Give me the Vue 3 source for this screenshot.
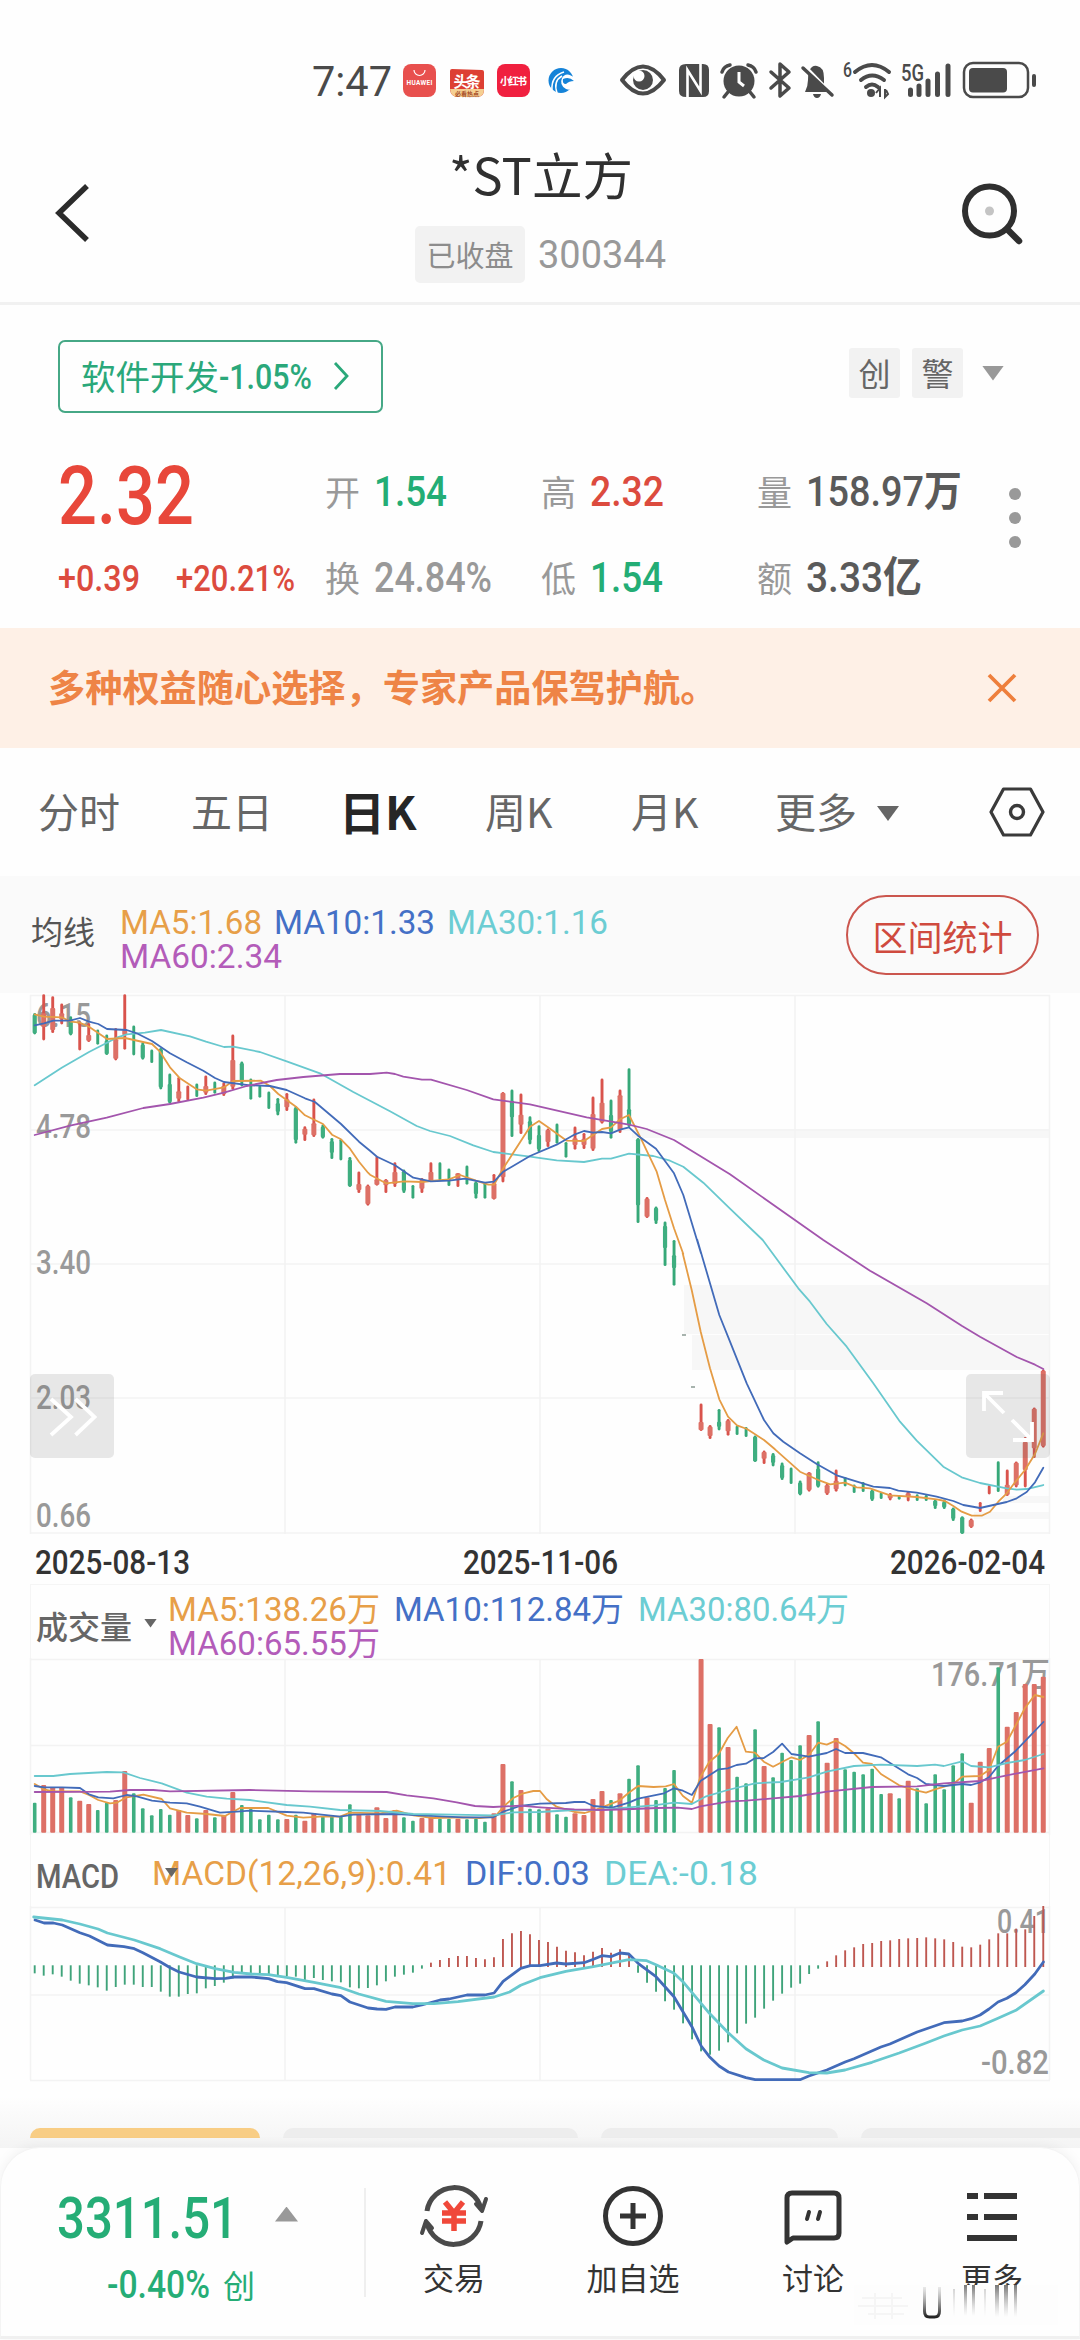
<script setup>
const vFit = {
  mounted(el, binding) {
    const natural = el.getBoundingClientRect().width
    el.style.transform = `scaleX(${binding.value / natural})`
    el.style.marginRight = `${binding.value - natural}px`
  },
}

const STEP = 9.005
const FIRST = 34.7
const barX = (i) => FIRST + STEP * i

// [direction, high, low, body top, body bottom]; three units per pixel
const candlesA = [
  ['g', 100, 162, 104, 160], ['r', 44, 180, 100, 140], ['r', 50, 158, 84, 150], ['r', 72, 132, 100, 118],
  ['g', 110, 165, 120, 162], ['r', 125, 210], ['r', 130, 185, 165, 182], ['g', 150, 193], ['g', 165, 224, 182, 222],
  ['r', 145, 240, 178, 236], ['r', 44, 208, 150, 165], ['g', 138, 225], ['g', 188, 238, 194, 234], ['g', 210, 248],
  ['g', 205, 327, 208, 322], ['g', 282, 370, 312, 366], ['r', 292, 366, 334, 356], ['r', 318, 360], ['g', 312, 350],
  ['r', 288, 344, 318, 338], ['g', 306, 340], ['r', 308, 347, 318, 342], ['r', 165, 328, 240, 320], ['g', 246, 318, 250, 305],
  ['g', 297, 358], ['g', 318, 352], ['g', 336, 386], ['g', 355, 405, 370, 395], ['r', 340, 392, 358, 382],
  ['g', 380, 490, 384, 480], ['r', 440, 482, 446, 464], ['r', 357, 470, 430, 466], ['g', 435, 475, 440, 472],
  ['g', 475, 536, 484, 518], ['g', 478, 540], ['g', 532, 620, 540, 618], ['r', 576, 638, 612, 630],
  ['r', 615, 676, 618, 672], ['r', 530, 616, 598, 614],
]
const candlesB = [
  ['r', 598, 638, 600, 616], ['r', 548, 620, 576, 612], ['g', 570, 638, 574, 632], ['g', 616, 655], ['r', 595, 638, 600, 626],
  ['r', 548, 605, 576, 604], ['g', 548, 600], ['g', 567, 617], ['r', 580, 620, 580, 600], ['g', 558, 613],
  ['g', 605, 655, 608, 642], ['g', 610, 655], ['r', 583, 658, 610, 656], ['r', 337, 606, 339, 592], ['g', 330, 470, 362, 412],
  ['r', 342, 461, 404, 434], ['g', 410, 492, 424, 480], ['g', 437, 515, 465, 508], ['r', 447, 500, 450, 486], ['g', 432, 490],
  ['g', 487, 532], ['r', 441, 508, 475, 495], ['r', 460, 506, 476, 495], ['r', 351, 512, 402, 506], ['r', 297, 430, 368, 426],
  ['g', 360, 475, 405, 455], ['r', 330, 458, 346, 450], ['g', 266, 440, 388, 435], ['g', 475, 728, 478, 676],
  ['r', 652, 713, 656, 710], ['g', 681, 731, 684, 722], ['g', 726, 857, 738, 804], ['g', 781, 916, 826, 864],
]
const candlesC = [
  ['r', 492, 572, 546, 570], ['r', 556, 596, 560, 588], ['g', 508, 570, 545, 560], ['r', 538, 586, 542, 574], ['g', 558, 584],
  ['g', 562, 590], ['g', 588, 665, 590, 664], ['r', 633, 671, 636, 656], ['g', 640, 678, 646, 668], ['g', 669, 719, 676, 714],
  ['g', 684, 731], ['g', 723, 765, 728, 762], ['r', 697, 754, 698, 750], ['g', 665, 742, 686, 738], ['r', 732, 764, 736, 760],
  ['r', 690, 754, 722, 748], ['g', 712, 738], ['g', 735, 758], ['g', 727, 755], ['g', 750, 782, 752, 778], ['g', 758, 776],
  ['r', 760, 780, 764, 775], ['g', 768, 778], ['r', 754, 783, 760, 770], ['g', 764, 782], ['g', 766, 782],
  ['g', 780, 806, 782, 798], ['g', 780, 806, 786, 802], ['g', 804, 842, 806, 836], ['g', 830, 881, 832, 880],
  ['r', 837, 863, 840, 860], ['r', 787, 815], ['r', 737, 762], ['g', 665, 755], ['r', 690, 767, 734, 764],
  ['r', 666, 741, 668, 736], ['r', 592, 741, 606, 690], ['r', 504, 653, 506, 625], ['r', 390, 622, 392, 618],
]
const place = (list, start, top) =>
  list.map(([d, hi, lo, bt, bb], k) => ({
    d,
    x: barX(start + k),
    hi: top + hi / 3,
    lo: top + lo / 3,
    bt: bt === undefined ? null : top + bt / 3,
    bb: bb === undefined ? null : top + bb / 3,
  }))
const candles = [
  ...place(candlesA, 0, 980),
  ...place(candlesB, 39, 980),
  ...place(candlesC, 74, 1240),
]

// Joins segments of [x, y] samples; each segment carries its own origin and scale.
const line = (...segments) =>
  segments
    .flatMap(([ox, oy, sx, s]) =>
      s.trim().split(/\s+/).map((p) => {
        const [x, y] = p.split(',').map(Number)
        return `${(ox + x / sx).toFixed(1)},${(oy + y / 3).toFixed(1)}`
      })
    )
    .join(' ')

const priceLines = [
  ['cyan', line(
    [20, 980, 3, '44,316 125,263 207,216 290,173 320,163 375,158 423,150 510,169 558,185 612,201 640,200 720,216 800,244 900,280 1000,336'],
    [370, 980, 3, '0,362 60,394 140,438 180,453 240,468 310,496 370,516 480,530 560,541 642,546 696,536 723,536 777,521 850,528 900,542 940,560 1000,608 1080,686'],
    [660, 1240, 3, '308,0 415,145 450,185 500,252 560,320 640,430 720,545 770,602 850,680 905,712 960,729 1040,745 1070,749 1100,747 1125,741 1150,735'])],
  ['orange', line(
    [20, 980, 3, '44,103 72,110 125,112 152,125 180,128 207,140 261,177 315,174 342,180 396,192 420,215 450,262 480,295 530,328 558,332 612,322 640,303 723,302 750,318 775,342 828,380 855,406 909,432 936,464 963,478 990,506 1017,545 1044,578'],
    [370, 980, 3, '0,584 48,610 102,604 156,606 183,603 237,598 270,585 318,602 355,614 372,614 400,565 480,440 507,423 534,442 590,482 642,483 696,447 723,442 750,418 777,405 810,470 860,575 885,660 912,745 940,822'],
    [660, 1240, 3, '68,40 95,150 122,275 150,385 178,478 204,530 231,556 261,567 312,600 345,628 420,695 480,722 510,733 555,728 590,742 630,745 690,766 770,771 830,778 855,783 880,798 905,815 935,827 965,827 990,815 1015,785 1040,760 1065,727 1095,690 1125,642 1150,580'])],
  ['blue', line(
    [20, 980, 3, '44,136 72,130 100,122 150,122 180,114 207,125 235,132 261,147 320,150 350,160 396,183 450,220 500,247 550,272 585,294 612,306 690,316 750,318 800,330 855,355 885,366 963,432 1017,485'],
    [370, 980, 3, '0,512 21,530 75,556 130,593 183,604 237,602 285,596 345,608 372,605 400,575 480,528 560,494 615,463 642,453 669,458 696,456 723,460 750,449 777,442 804,467 858,506 912,580 940,645 993,820'],
    [660, 1240, 3, '112,0 178,225 204,290 260,430 312,540 340,580 370,605 420,640 470,672 530,706 640,740 690,744 715,752 770,758 830,770 880,783 910,795 960,804 1000,795 1040,786 1070,775 1100,756 1125,727 1150,683'])],
  ['purple', line(
    [20, 980, 3, '44,465 150,437 260,413 370,384 450,372 550,353 612,338 680,318 770,300 850,291 960,282'],
    [370, 980, 3, '0,282 50,278 75,282 100,290 156,299 183,299 290,330 370,358 480,373 650,412 777,434 830,447 912,480 1080,583'],
    [660, 1240, 3, '490,0 630,92 800,190 905,257 960,290 1070,351 1125,374 1150,387'])],
]

const volumeDirs = candles.map((c) => c.d)
volumeDirs.splice(72, 0, '-', '-')
const volumeTops = [
  668, 615, 622, 622, 652, 662, 672, 690, 668, 660, 573, 640, 685, 706, 687, 704, 690, 705, 715, 690, 712, 706, 636, 675, 687,
  718, 704, 718, 717, 704, 722, 700, 710, 706, 710, 673, 702, 706, 682, 714, 690, 712, 722, 714, 710, 716, 716, 716, 718, 716,
  725, 700, 552, 604, 630, 686, 688, 685, 703, 710, 700, 705, 657, 633, 660, 640, 596, 556, 652, 660, 624, 570, 757, 757, 237,
  432, 442, 501, 590, 610, 448, 558, 592, 518, 540, 496, 465, 424, 548, 474, 568, 575, 583, 566, 642, 640, 655, 602, 625, 670,
  583, 628, 556, 520, 668, 545, 504, 262, 440, 396, 312, 312, 290,
]
const volumeBars = volumeTops
  .map((t, i) => ({ d: volumeDirs[i], x: barX(i), top: 1580 + t / 3 }))
  .filter((b) => b.d !== '-')

const volumeLines = [
  ['orange', line(
    [20, 1580, 3, '44,612 72,628 100,634 180,634 207,645 235,660 270,670 290,668 320,652 370,644 425,657 450,685 500,698 560,702 615,708 660,684 745,684 800,707 850,713 900,710 960,710 990,698 1080,700 1130,692 1180,706 1240,714 1330,712 1380,714 1425,710 1450,680 1480,654 1510,640 1540,633'],
    [540, 1580, 2.904, '0,633 20,658 48,680 75,688 100,696 130,699 165,688 200,674 230,662 258,638 285,618 330,621 365,619 389,612 415,648 441,668 466,590 492,545 519,522 545,474 571,440 598,515 624,518 650,545 677,560 703,546 730,532 755,540 781,525 808,488 833,494 860,482 886,498 912,520 938,548 964,552 990,582 1043,616 1095,632 1121,638 1147,628 1200,612 1226,590 1278,588 1304,570 1330,500 1356,485 1382,435 1408,385 1437,345 1462,351'])],
  ['blue', line(
    [20, 1580, 3, '44,618 72,622 125,622 180,624 207,643 235,652 280,655 320,645 350,649 396,662 450,668 500,670 540,680 600,698 650,695 690,692 800,696 850,698 960,710 1000,704 1130,702 1200,706 1330,712 1420,712 1450,695 1500,678'],
    [540, 1580, 2.904, '0,671 75,669 100,666 130,666 155,678 210,683 258,668 285,656 360,640 389,625 415,632 441,645 466,603 519,568 545,565 571,555 598,551 624,535 650,534 677,516 703,491 730,522 781,530 833,519 860,507 886,519 938,519 990,532 1069,583 1095,594 1121,612 1173,618 1226,612 1252,615 1278,607 1304,592 1330,558 1382,512 1462,426'])],
  ['cyan', line(
    [20, 1580, 3, '44,588 100,588 150,582 260,576 310,577 360,594 425,610 500,638 560,650 620,656 690,660 800,675 870,680 960,690 1080,693 1180,702 1300,704 1420,706 1480,697'],
    [540, 1580, 2.904, '0,696 100,690 180,689 258,682 330,676 389,668 441,672 480,650 545,630 624,610 700,606 781,592 833,575 912,558 990,554 1095,558 1147,554 1173,558 1226,544 1252,558 1304,562 1356,549 1408,540 1462,522'])],
  ['purple', line(
    [20, 1580, 3, '44,636 270,635 330,630 400,630 450,634 690,630 870,634 1100,636 1160,646 1240,655 1310,667 1365,678 1420,681 1500,677'],
    [540, 1580, 2.904, '0,682 100,688 180,690 270,687 340,684 400,683 441,687 466,679 545,665 598,662 677,655 755,648 833,635 964,621 1095,619 1173,610 1278,603 1356,586 1462,565'])],
]

const macdTips = [
  400, 407, 403, 410, 422, 431, 436, 442, 452, 441, 434, 434, 441, 441, 455, 470, 470, 462, 460, 445, 438, 428, 415, 400, 402,
  400, 402, 405, 408, 410, 420, 414, 420, 424, 427, 442, 445, 444, 436, 424, 410, 404, 398, 386, 368, 360, 354, 348, 348, 354,
  358, 352, 297, 280, 273, 283, 300, 306, 320, 332, 337, 346, 335, 324, 338, 328, 342, 398, 428, 455, 484, 509, 550, 598, 634,
  644, 632, 607, 580, 551, 533, 506, 482, 461, 443, 431, 402, 386, 364, 346, 331, 322, 312, 309, 303, 301, 297, 295, 294, 292,
  295, 298, 306, 320, 322, 314, 298, 280, 280, 266, 268, 228, 198,
]
const macdBars = macdTips.map((t, i) => ({
  x: barX(i),
  up: t < 377,
  y1: t < 377 ? 1967 : 1965.3,
  y2: 1840 + t / 3,
}))
const macdLines = [
  ['blue', line(
    [0, 1840, 2.904, '102,240 128,249 155,249 181,255 232,278 260,288 312,315 360,320 390,326 415,338 465,365 492,382 520,396 571,411 625,416 655,415 680,411 730,411 780,416 806,425 832,428 886,446 912,446 964,462 990,467 1016,486 1069,504 1095,507 1121,508 1147,501 1199,501 1225,495 1278,480 1304,477 1356,465 1408,465 1435,459 1461,424 1512,385 1540,377'],
    [540, 1840, 2.904, '0,377 48,369 75,372 128,368 155,358 180,347 206,350 232,339 258,342 285,370 337,410 389,470 441,560 468,618 492,650 520,678 547,696 598,713 625,719 755,719 781,708 833,690 886,666 912,656 990,621 1016,612 1095,576 1173,548 1226,543 1252,536 1278,525 1304,507 1330,486 1356,475 1382,458 1408,434 1437,402 1462,366'])],
  ['cyan', line(
    [0, 1840, 2.904, '98,231 181,240 232,252 285,267 312,279 390,300 465,326 520,350 571,371 625,386 680,397 730,402 780,404 832,412 912,427 990,443 1042,462 1121,484 1199,491 1260,491 1330,485 1435,471 1480,456 1512,436'],
    [540, 1840, 2.904, '0,413 75,394 155,380 258,359 310,362 337,374 389,400 415,425 492,520 545,577 598,626 650,660 703,684 781,698 833,699 886,690 964,667 1043,639 1121,609 1173,588 1226,570 1278,558 1330,535 1382,511 1462,453'])],
]
const columns = [285, 540, 795]
const priceLabels = [['6.15', 1027], ['4.78', 1138], ['3.40', 1274], ['2.03', 1408.5], ['0.66', 1527]]
</script>

<template>
  <div class="page">
    <div class="status">
      <span class="clock num" v-fit="80">7:47</span>
      <svg class="apps" width="176" height="40" viewBox="400 60 176 40">
        <rect x="403" y="64" width="33" height="33" rx="8" fill="#e8504e" />
        <path d="M414 70a5.5 5.5 0 0 0 11 0" fill="none" stroke="#fff" stroke-width="1.2" />
        <text x="419.5" y="85" class="tiny" font-size="6.5" textLength="26">HUAWEI</text>
        <path d="M450 71q0-2 2-2l30 1q2 0 2 2v18q0 7-7 7h-19q-7 0-8-7z" fill="#dd3f33" />
        <path d="M450 89h34q0 8-7 8h-19q-7 0-8-8z" fill="#f5cf92" />
        <text x="467" y="87" class="tiny cjk" font-size="15" textLength="27">头条</text>
        <text x="467" y="96" class="tiny cjk brown" font-size="6" textLength="24">必看热点</text>
        <rect x="497" y="64" width="33" height="33" rx="8" fill="#f0203f" />
        <text x="513.5" y="84.500" class="tiny cjk" font-size="10.500" textLength="27">小红书</text>
        <circle cx="561" cy="80.500" r="12.500" fill="#1583d8" />
        <path d="M575 78q-9-7-13 0-3 7 4 11 5 2 9-2z" fill="#fff" />
        <path d="M552 90q-1-14 12-18M557 93q-4-12 5-17" fill="none" stroke="#fff" stroke-width="1.500" />
        <path d="M563 79q6-3 11 2-5 0-8 3-4 0-3-5z" fill="#1583d8" />
      </svg>
      <svg class="system" width="420" height="40" viewBox="618 60 420 40">
        <path d="M622 80q21-27 42 0q-21 27-42 0z" fill="none" stroke="#4a4a4a" stroke-width="4" stroke-linejoin="round" />
        <circle cx="643" cy="80" r="10" fill="#4a4a4a" /><circle cx="639" cy="76" r="5.500" fill="#fff" />
        <path d="M686 64h17q6 0 6 6v21q0 6-6 6h-17q-7 0-7-6V70q0-6 7-6z" fill="#4a4a4a" />
        <path d="M687.500 97V70l13 21V64" fill="none" stroke="#fff" stroke-width="2.600" />
        <circle cx="739" cy="81" r="15.500" fill="#4a4a4a" />
        <path d="M739 72v10l5 4" fill="none" stroke="#fff" stroke-width="3" />
        <path d="M722 72q2-6 8-7M756 72q-2-6-8-7M728 92l-4 5M750 92l4 5" fill="none" stroke="#4a4a4a" stroke-width="3.500" stroke-linecap="round" />
        <path d="M771 72l18 16-9 8V64l9 8-18 16" fill="none" stroke="#4a4a4a" stroke-width="3.500" stroke-linejoin="round" stroke-linecap="round" />
        <path d="M805 92h22l-3-5V78q0-11-7-12-5-1-8 5-1 3-1 9 0 6-3 12zM813 94h8q-1 4-4 4t-4-4z" fill="#4a4a4a" />
        <path d="M804 65l30 31" stroke="#fff" stroke-width="3" /><path d="M803 68l29 27" stroke="#4a4a4a" stroke-width="3.500" stroke-linecap="round" />
        <text x="843" y="77" class="sys" font-size="20" textLength="9" lengthAdjust="spacingAndGlyphs">6</text>
        <g fill="none" stroke="#4a4a4a" stroke-width="4" stroke-linecap="round">
          <path d="M855 72q17-14 34 0M861 80q11-9 23 0M866 87q6-5 12 0" />
        </g>
        <circle cx="871" cy="93" r="4" fill="#4a4a4a" />
        <path d="M876 93l4-5v9M886 90l2 4-3 3v-8" fill="none" stroke="#4a4a4a" stroke-width="2" />
        <text x="901" y="81" class="sys" font-size="24" textLength="23" lengthAdjust="spacingAndGlyphs">5G</text>
        <g stroke="#4a4a4a" stroke-width="5" stroke-linecap="round">
          <path d="M910.500 90v4.500M919 86v8.500M928 81v13.500M937.500 74v20.500M948 66v28.500" />
        </g>
        <rect x="964" y="63" width="64" height="34" rx="9" fill="none" stroke="#4a4a4a" stroke-width="2.500" />
        <rect x="969" y="68" width="38" height="24.500" rx="4" fill="#4a4a4a" />
        <path d="M1034 76v9" stroke="#4a4a4a" stroke-width="4" stroke-linecap="round" />
      </svg>
    </div>

    <header class="header">
      <svg class="back" width="44" height="70" viewBox="50 178 44 70">
        <path d="M87 186L59 213l28 27" fill="none" stroke="#2b2b2b" stroke-width="5.500" />
      </svg>
      <div class="title">
        <h1 v-fit="184">*ST立方</h1>
        <div class="subtitle">
          <span class="closed">已收盘</span>
          <span class="code num" v-fit="128">300344</span>
        </div>
      </div>
      <svg class="search" width="64" height="64" viewBox="960 181 64 64">
        <circle cx="989.500" cy="211" r="24.500" fill="none" stroke="#2f2f2f" stroke-width="6" />
        <path d="M1007 229l12 12" stroke="#2f2f2f" stroke-width="6.500" stroke-linecap="round" />
        <circle cx="989.500" cy="211" r="4.500" fill="#c4c4c4" />
      </svg>
    </header>

    <section class="quote">
      <div class="industry-row">
        <div class="industry">
          <span>软件开发</span><span class="num medium" v-fit="93">-1.05%</span>
          <svg width="20" height="32" viewBox="0 0 20 32"><path d="M3 3l12 13L3 29" fill="none" stroke="#2aa87a" stroke-width="2.800" /></svg>
        </div>
        <div class="tags">
          <span class="tag">创</span><span class="tag">警</span><i class="down light"></i>
        </div>
      </div>
      <div class="stats">
        <div class="cell"><b class="last num" v-fit="136">2.32</b></div>
        <div class="cell"><span class="key">开</span><span class="val num green" v-fit="73">1.54</span></div>
        <div class="cell"><span class="key">高</span><span class="val num red" v-fit="74">2.32</span></div>
        <div class="cell"><span class="key">量</span><span class="val num dark" v-fit="156">158.97<b>万</b></span></div>
        <div class="cell change"><span class="num" v-fit="82">+0.39</span><span class="num" v-fit="119">+20.21%</span></div>
        <div class="cell"><span class="key">换</span><span class="val num grey" v-fit="118">24.84%</span></div>
        <div class="cell"><span class="key">低</span><span class="val num green" v-fit="73">1.54</span></div>
        <div class="cell"><span class="key">额</span><span class="val num dark" v-fit="116">3.33<b>亿</b></span></div>
        <div class="dots"><i></i><i></i><i></i></div>
      </div>
    </section>

    <div class="banner">
      <span>多种权益随心选择，专家产品保驾护航。</span>
      <svg width="32" height="32" viewBox="0 0 32 32"><path d="M3 3l26 26M29 3L3 29" stroke="#ee7f3c" stroke-width="3.800" /></svg>
    </div>

    <nav class="tabs">
      <span class="t1">分时</span><span class="t2">五日</span><b class="t3">日K</b><span class="t4">周K</span><span class="t5">月K</span>
      <span class="t6">更多<i class="down"></i></span>
      <svg width="58" height="54" viewBox="0 0 58 54">
        <path d="M3 27L15.500 4h27L55 27 42.500 50h-27z" fill="none" stroke="#3a3a3a" stroke-width="3.200" stroke-linejoin="round" />
        <circle cx="29" cy="27" r="6.500" fill="none" stroke="#3a3a3a" stroke-width="3.400" />
      </svg>
    </nav>

    <div class="legend">
      <span class="name">均线</span>
      <div class="mas">
        <div class="ma-row"><span class="orange" v-fit="142">MA5:1.68</span><span class="blue" v-fit="161">MA10:1.33</span><span class="cyan" v-fit="161">MA30:1.16</span></div>
        <div class="ma-row"><span class="purple" v-fit="162">MA60:2.34</span></div>
      </div>
      <button class="range">区间统计</button>
    </div>

    <div class="price">
      <svg width="1080" height="543" viewBox="0 993 1080 543">
        <g class="bands">
          <rect x="632" y="1129" width="418" height="9" />
          <rect x="684" y="1285" width="366" height="49" />
          <rect x="692" y="1335" width="358" height="35" />
          <rect x="1003" y="1496" width="47" height="7" />
          <rect x="974" y="1512" width="76" height="7" />
        </g>
        <g class="grid">
          <path d="M30 995.500H1050M30 1130H1050M30 1264H1050M30 1398H1050M30 1533H1050M30.500 995V1534M1049.500 995V1534" />
          <path v-for="c in columns" :key="c" :d="`M${c} 995V1534`" />
        </g>
        <g class="axis">
          <text v-for="[t, y] in priceLabels" :key="t" x="36" :y="y" textLength="55" lengthAdjust="spacingAndGlyphs">{{ t }}</text>
        </g>
        <g v-for="c in candles" :key="c.x" :class="['bar', c.d]">
          <path class="wick" :d="`M${c.x} ${c.hi + 1}V${c.lo - 1}`" />
          <rect v-if="c.bt !== null" :x="c.x - (c.d === 'r' ? 2.5 : 2.1)" :y="c.bt" :width="c.d === 'r' ? 5 : 4.2" :height="c.bb - c.bt" rx="1" />
        </g>
        <path d="M682 1335h4M691 1387h4" stroke="#8a9a92" stroke-width="1.500" />
        <polyline v-for="[k, p] in priceLines" :key="k" :class="['line', k]" :points="p" />
      </svg>
      <div class="overlay left">
        <svg width="84" height="84" viewBox="30 1374 84 84"><path d="M51 1399l20 18-20 18M75.500 1399l19 18-19 18" /></svg>
      </div>
      <div class="overlay right">
        <svg width="84" height="84" viewBox="966 1374 84 84"><path d="M1004 1413l-20-20m0 18v-18h19M1012 1420l20 20m0-18v18h-19" /></svg>
      </div>
    </div>
    <div class="dates"><span v-fit="155">2025-08-13</span><span v-fit="155">2025-11-06</span><span v-fit="155">2026-02-04</span></div>

    <div class="legend volume">
      <span class="name">成交量<i class="down small"></i></span>
      <div class="mas">
        <div class="ma-row"><span class="orange" v-fit="212">MA5:138.26万</span><span class="blue" v-fit="230">MA10:112.84万</span><span class="cyan" v-fit="211">MA30:80.64万</span></div>
        <div class="ma-row"><span class="purple" v-fit="212">MA60:65.55万</span></div>
      </div>
    </div>
    <svg class="chart" width="1080" height="177" viewBox="0 1658 1080 177">
      <g class="grid">
        <path d="M30 1659.500H1050M30 1745.500H1050M30 1832.500H1050M30.500 1658V1835M1049.500 1658V1835" />
        <path v-for="c in columns" :key="c" :d="`M${c} 1659V1832`" />
      </g>
      <g class="axis"><text x="931" y="1686" textLength="119" lengthAdjust="spacingAndGlyphs">176.71万</text></g>
      <g v-for="b in volumeBars" :key="b.x" :class="['bar', b.d]">
        <rect :x="b.x - (b.d === 'r' ? 2.5 : 1.8)" :y="b.top" :width="b.d === 'r' ? 5 : 3.6" :height="1832.700 - b.top" rx="1" />
      </g>
      <polyline v-for="[k, p] in volumeLines" :key="k" :class="['line', k]" :points="p" />
    </svg>

    <div class="legend macd">
      <span class="name" v-fit="83">MACD</span>
      <div class="mas">
        <div class="ma-row"><span class="orange" v-fit="299">MACD(12,26,9):0.41</span><span class="blue" v-fit="125">DIF:0.03</span><span class="cyan" v-fit="154">DEA:-0.18</span></div>
      </div>
      <i class="down small over"></i>
    </div>
    <svg class="chart" width="1080" height="178" viewBox="0 1906 1080 178">
      <g class="grid">
        <path d="M30 1907.500H1050M30 1995H1050M30 2080.500H1050M30.500 1906V2080M1049.500 1906V2080" />
        <path v-for="c in columns" :key="c" :d="`M${c} 1907V2080`" />
      </g>
      <g class="axis">
        <text x="997" y="1933" textLength="53" lengthAdjust="spacingAndGlyphs">0.41</text>
        <text x="981" y="2073.500" textLength="68" lengthAdjust="spacingAndGlyphs">-0.82</text>
      </g>
      <path v-for="b in macdBars" :key="b.x" :d="`M${b.x} ${b.y1}V${b.y2}`" :class="['hist', b.up ? 'up' : 'dn']" />
      <polyline v-for="[k, p] in macdLines" :key="k" :class="['line thick', k]" :points="p" />
    </svg>

    <div class="cards"><i class="active"></i><i></i><i></i><i></i></div>

    <footer class="footer">
      <div class="index">
        <div class="index-row"><span class="num points" v-fit="181">3311.51</span><i class="up-arrow"></i></div>
        <div class="index-row sub"><span class="num" v-fit="103">-0.40%</span><span class="board">创</span></div>
      </div>
      <div class="action trade">
        <svg width="68" height="64" viewBox="-34 -32 68 64">
          <path d="M-27-5A27.500 27.500 0 0 1 27-7M27 5A27.500 27.500 0 0 1-27 7" fill="none" stroke="#4a4a4a" stroke-width="5" />
          <path d="M32-17L28-5l-6-7M-32 17L-28 5l6 7" fill="none" stroke="#4a4a4a" stroke-width="4" stroke-linejoin="round" stroke-linecap="round" />
          <path d="M-9-14L0-3 9-14M-12-3h24M-12 5h24M0-3v18" fill="none" stroke="#f0483a" stroke-width="5.500" />
        </svg>
        <span>交易</span>
      </div>
      <div class="action add">
        <svg width="68" height="64" viewBox="-34 -32 68 64">
          <circle r="27.500" fill="none" stroke="#333" stroke-width="5" />
          <path d="M-13 0h26M0-13v26" stroke="#333" stroke-width="5" />
        </svg>
        <span>加自选</span>
      </div>
      <div class="action talk">
        <svg width="68" height="64" viewBox="-34 -32 68 64">
          <path d="M-26 26V-18q0-5 5-5h42q5 0 5 5v35q0 5-5 5h-41z" fill="none" stroke="#333" stroke-width="5" stroke-linejoin="round" />
          <path d="M-4-4l-2 7M7-4L5 3" stroke="#333" stroke-width="4" stroke-linecap="round" />
        </svg>
        <span>讨论</span>
      </div>
      <div class="action menu">
        <svg width="68" height="64" viewBox="-34 -32 68 64">
          <path d="M-25-20h11M-8-20H25M-25 1h11M-8 1H25M-25 22H25" stroke="#333" stroke-width="6" />
        </svg>
        <span>更多</span>
      </div>
      <svg class="smear" width="204" height="40" viewBox="854 2284 204 40">
        <defs>
          <linearGradient id="fade" x1="0" y1="0" x2="0" y2="1">
            <stop offset="0" stop-color="#555" stop-opacity=".8" /><stop offset="1" stop-color="#999" stop-opacity="0" />
          </linearGradient>
          <linearGradient id="rise" x1="0" y1="0" x2="0" y2="1">
            <stop offset="0" stop-color="#999" stop-opacity=".2" /><stop offset="1" stop-color="#222" />
          </linearGradient>
        </defs>
        <rect x="854" y="2284" width="204" height="40" fill="#fdfdfd" />
        <g fill="url(#fade)">
          <rect x="964" y="2284" width="3" height="31" /><rect x="972" y="2284" width="3" height="31" />
          <rect x="995" y="2284" width="4" height="32" /><rect x="1004" y="2284" width="4" height="32" /><rect x="1014" y="2284" width="3" height="32" />
          <rect x="953" y="2288" width="2" height="28" opacity=".3" /><rect x="984" y="2288" width="2" height="28" opacity=".3" />
        </g>
        <path d="M924.500 2286v24q0 6 5 6h5q5 0 5-6v-24" fill="none" stroke="url(#rise)" stroke-width="3" />
        <path d="M858 2305h50M862 2297h40M868 2313h36M875 2292v26M892 2292v26" stroke="#f5f5f5" stroke-width="2" />
      </svg>
    </footer>
  </div>
</template>

<style>
body { background: #fff; }
</style>

<style scoped>
* { box-sizing: border-box; }
.page { position: relative; width: 1080px; height: 2340px; overflow: hidden; display: flex; flex-direction: column; background: #fefefe; color: #333; font-family: "Noto Sans CJK SC", "Noto Sans", sans-serif; line-height: 1; white-space: nowrap; }
.page > * { flex: none; }
.page span, .page b, h1 { transform-origin: left center; }
svg { display: block; flex: none; overflow: visible; }
i { display: block; flex: none; }
.num { display: inline-block; font-family: Roboto, "Noto Sans CJK SC", sans-serif; }
.medium { font-weight: 500; }
.green { color: #23ad75; }
.red { color: #dc4b3e; }
.dark { color: #5a5a5a; }
.grey { color: #999; }
.down { width: 22px; height: 15px; background: #666; clip-path: polygon(0 0, 100% 0, 50% 100%); }
.down.light { background: #999; }
.down.small { width: 13px; height: 9px; }

.status { height: 108px; padding: 60px 42px 0 312px; display: flex; align-items: flex-start; }
.clock { font-size: 43px; line-height: 42px; color: #4a4a4a; }
.apps { margin-left: 8px; }
.system { margin-left: 42px; }
.tiny { fill: #fff; font-family: Roboto, sans-serif; font-weight: 700; text-anchor: middle; }
.tiny.cjk { font-family: "Noto Sans CJK SC", sans-serif; }
.tiny.brown { fill: #a8502c; }
.sys { fill: #4a4a4a; font-family: Roboto, sans-serif; font-weight: 500; }

.header { height: 197px; padding: 0 56px 0 50px; border-bottom: 3px solid #f1f1f1; display: flex; justify-content: space-between; align-items: flex-start; }
.back { margin-top: 70px; }
.search { margin-top: 73px; }
.title { margin-left: 27px; margin-top: 35px; display: flex; flex-direction: column; align-items: center; }
h1 { margin: 0; font-size: 50px; line-height: 60px; font-weight: 400; color: #303030; }
.subtitle { margin-top: 23px; display: flex; align-items: center; gap: 13px; }
.closed { width: 110px; height: 57px; padding-bottom: 1px; border-radius: 5px; background: #f2f2f2; color: #8c8c8c; font-size: 29px; display: flex; align-items: center; justify-content: center; }
.code { font-size: 38px; color: #999; }

.quote { height: 323px; padding: 35px 0 0 58px; }
.industry-row { height: 73px; display: flex; justify-content: space-between; }
.industry { width: 325px; height: 73px; padding: 0 0 2px 21px; border: 2px solid #46a886; border-radius: 7px; color: #2aa87a; font-size: 34.5px; display: flex; align-items: center; }
.industry .num { font-size: 35px; padding-top: 4px; }
.industry svg { margin-left: 20px; margin-top: 1px; }
.tags { margin: 8px 76px 0 0; height: 50px; display: flex; align-items: center; }
.tag { width: 51px; height: 50px; margin-right: 12px; padding-bottom: 3px; background: #f2f2f2; border-radius: 3px; color: #666; font-size: 32px; display: flex; align-items: center; justify-content: center; }
.tags .down { margin-left: 7px; }
.stats { position: relative; margin-top: 36px; display: grid; grid-template-columns: 267px 216px 216px 260px; grid-auto-rows: 86px; }
.cell { display: flex; align-items: center; }
.key { width: 49px; font-size: 35px; color: #999; margin-top: -3px; }
.val { font-size: 42.5px; font-weight: 500; margin-top: 1px; }
.val b { font-weight: 700; }
.last { font-size: 81px; font-weight: 500; color: #e8473a; margin-top: 9px; }
.change { gap: 36px; color: #dc4b3e; font-size: 37px; font-weight: 500; }
.dots { position: absolute; left: 951px; top: 39px; display: flex; flex-direction: column; gap: 12px; }
.dots i { width: 12px; height: 12px; border-radius: 50%; background: #999; }

.banner { height: 120px; padding: 0 62px 2px 48px; background: #fef0e6; display: flex; align-items: center; justify-content: space-between; color: #ee8446; font-size: 37.2px; font-weight: 700; }
.banner svg { margin-top: 2px; }

.tabs { height: 128px; display: flex; align-items: center; color: #666; font-size: 41px; padding-bottom: 4px; }
.tabs svg { margin-top: 4px; margin-left: 89px; }
.t1 { margin-left: 38px; width: 153px; }
.t2 { width: 148px; }
.t3 { width: 146px; color: #262626; font-size: 46px; }
.t4 { width: 146px; }
.t5 { width: 144px; }
.t6 { display: flex; align-items: center; }
.t6 .down { margin: 7px 0 0 20px; }

.legend { display: flex; align-items: flex-start; height: 117px; background: #fafafa; padding-left: 31px; }
.legend .name { width: 89px; font-size: 32px; color: #555; display: flex; align-items: center; }
.legend > .name { margin-top: 38px; }
.mas { padding-top: 30px; }
.ma-row { display: flex; gap: 12px; height: 33.5px; align-items: center; font-family: Roboto, "Noto Sans CJK SC", sans-serif; font-size: 33.5px; font-weight: 400; }
.ma-row span { display: inline-block; }
.ma-row .orange { color: #e79f48; }
.ma-row .blue { color: #4470c6; }
.ma-row .cyan { color: #6ccdd3; }
.ma-row .purple { color: #b35cb9; }
.range { margin: 19px 41px 0 auto; width: 193px; height: 80px; border: 2.5px solid #cb564e; border-radius: 40px; background: transparent; color: #cf4a3e; font: 35px/1 "Noto Sans CJK SC", sans-serif; padding: 0; }

.price { position: relative; height: 543px; }
.bands rect { fill: #f7f7f7; }
.grid path { fill: none; stroke: #f3f3f3; stroke-width: 1.6; }
.axis text { fill: #999; font: 500 33px Roboto, "Noto Sans CJK SC", sans-serif; }
.bar .wick { fill: none; stroke-width: 2.9; stroke-linecap: round; }
.bar.r .wick { stroke: #d9534c; }
.bar.r rect { fill: #dd7066; }
.bar.g .wick { stroke: #36a878; }
.bar.g rect { fill: #3fae80; }
.line { fill: none; stroke-width: 1.8; stroke-linejoin: round; stroke-linecap: round; }
.line.thick { stroke-width: 2.8; }
.line.orange { stroke: #e59c45; }
.line.blue { stroke: #426bb9; }
.line.cyan { stroke: #68c8ce; }
.line.purple { stroke: #a355ad; }
.hist { stroke-width: 1.9; fill: none; }
.hist.up { stroke: #be5750; }
.hist.dn { stroke: #3fa37a; }
.overlay { position: absolute; top: 381px; width: 84px; height: 84px; border-radius: 5px; background: rgba(90, 90, 90, .14); }
.overlay.left { left: 30px; }
.overlay.right { left: 966px; }
.overlay path { fill: none; stroke: #fff; stroke-width: 3.8; }
.dates { height: 48px; padding: 9px 35px 0 35px; display: flex; justify-content: space-between; font: 500 33px/36px Roboto, sans-serif; color: #333; }

.legend.volume, .legend.macd { position: relative; margin: 0 30px; padding-left: 5px; background: transparent; border: solid #f5f5f5; border-width: 0 1.5px; }
.legend.volume { height: 74px; border-top-width: 1.5px; }
.volume .name { width: 132px; margin-top: 24px; font-weight: 500; color: #666; }
.volume .name .down { margin: -4px 0 0 12px; }
.volume .mas { padding-top: 8px; }
.volume .ma-row { gap: 14px; }
.legend.macd { height: 71px; }
.macd .name { display: inline-block; margin-top: 24px; font: 500 34px/34px Roboto, sans-serif; color: #666; width: auto; }
.macd .mas { margin-left: 33px; padding-top: 22px; }
.macd .ma-row { gap: 14px; }
.over { position: absolute; left: 134px; top: 33px; }

.cards { height: 64px; padding: 44px 0 0 30px; display: flex; gap: 23px; background: linear-gradient(#fefefe 20%, #f4f4f4); }
.cards i { height: 10px; width: 237px; border-radius: 11px 11px 0 0; background: #ededed; }
.cards i.active { width: 230px; background: #f8cd84; }
.cards i:nth-child(2) { width: 295px; }

.footer { position: relative; height: 192px; margin-top: -1px; border: 1px solid #f4f4f4; border-bottom: 3px solid #f0f0f0; border-radius: 40px 40px 0 0; background: #fefefe; box-shadow: 0 -2px 12px rgba(0, 0, 0, .05); display: flex; align-items: flex-start; }
.index { width: 365px; height: 109px; margin-top: 40px; border-right: 2px solid #efefef; padding-left: 56px; }
.index-row { display: flex; align-items: center; height: 60px; color: #25ad76; }
.points { font-size: 57px; font-weight: 500; }
.up-arrow { margin: -8px 0 0 37px; width: 23px; height: 15px; background: #999; clip-path: polygon(50% 0, 100% 100%, 0 100%); }
.index-row.sub { padding: 2px 0 0 50px; height: 72px; font-size: 39px; font-weight: 500; }
.board { margin: -3px 0 0 13px; font-size: 32px; font-weight: 400; }
.action { width: 120px; padding-top: 36px; display: flex; flex-direction: column; align-items: center; font-size: 31px; color: #333; }
.action span { margin-top: 13px; }
.trade { margin-left: 28px; }
.add { margin-left: 59px; }
.talk { margin-left: 60px; }
.menu { margin-left: 59px; }
.smear { position: absolute; left: 853px; top: 137px; }
</style>
